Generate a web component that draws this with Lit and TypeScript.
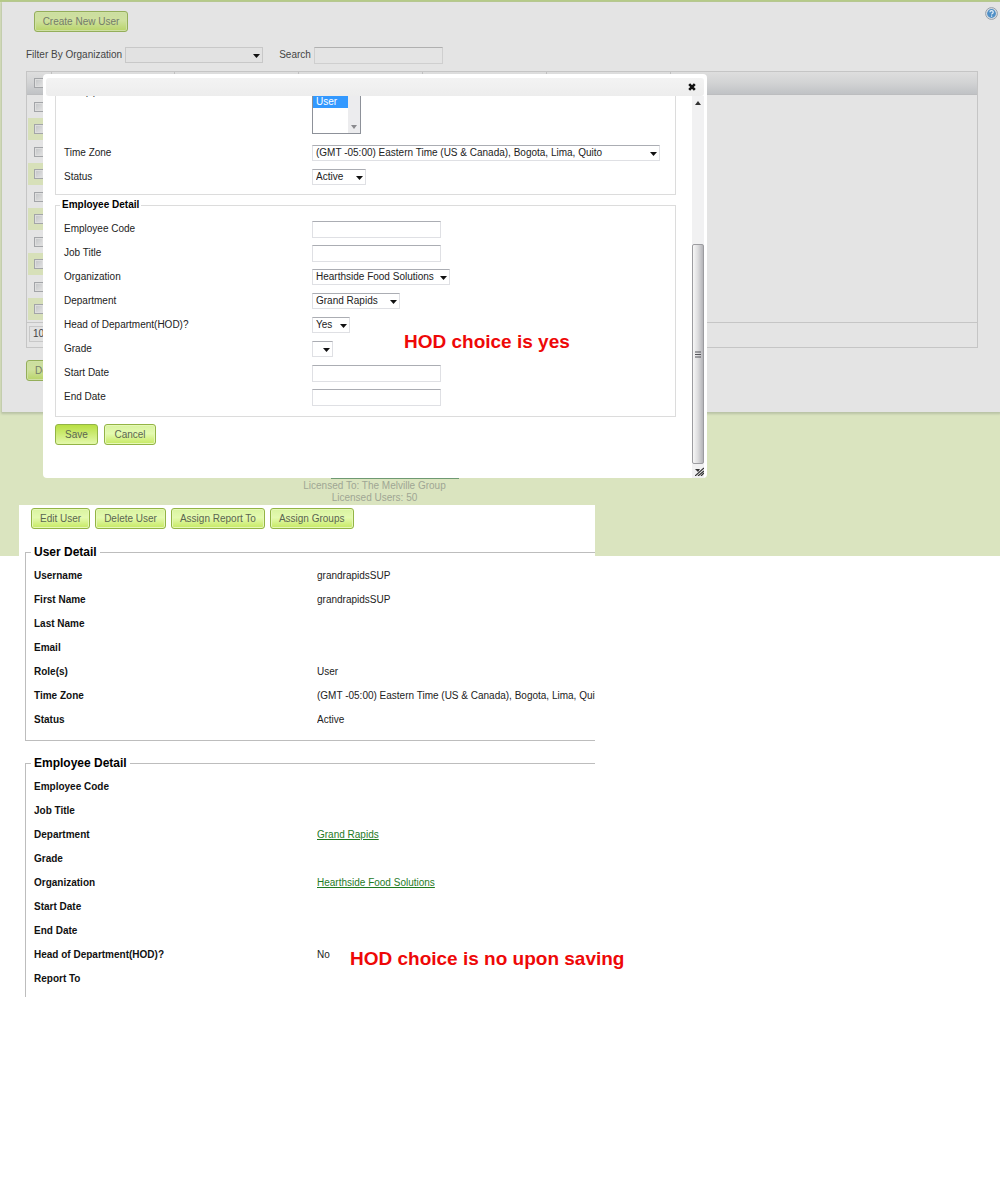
import { LitElement, html, css, nothing } from "lit";
import { customElement, property } from "lit/decorators.js";

const controls = css`
  :host,
  * {
    box-sizing: border-box;
  }
  button,
  input,
  select {
    font: inherit;
    color: inherit;
    margin: 0;
  }
  .btn {
    height: 21px;
    padding: 0 8px;
    border: 1px solid #93b445;
    border-radius: 3px;
    background: linear-gradient(#d9f3a0, #e4fab0 45%, #c6e961);
    box-shadow: inset 0 0 0 1px #e6f8b8;
    color: #5b6650;
    white-space: nowrap;
    line-height: 19px;
  }
  .btn.primary {
    background: linear-gradient(#b8df42, #e3f8ab);
    box-shadow: none;
  }
  .btn.dim {
    background: linear-gradient(#cbdda0, #cfe19e 45%, #b8d469);
    box-shadow: inset 0 0 0 1px #cfe0a4;
    border-color: #94ae5a;
    color: #747c6a;
  }
  .text {
    display: block;
    width: 129px;
    height: 17px;
    padding: 0 3px;
    border: 1px solid #dfe0e4;
    border-top-color: #abadb3;
    border-radius: 0;
    background: #fff;
    outline: none;
  }
  .text.dim {
    background: #e4e4e4;
    border-color: #cfcfcf;
    border-top-color: #b0b0b0;
  }
`;

@customElement("drop-down")
class DropDown extends LitElement {
  @property() name = "";
  @property() label = "";
  @property() value = "";
  @property({ type: Boolean }) dim = false;

  static styles = [
    controls,
    css`
      :host {
        display: block;
        position: relative;
        height: 16px;
      }
      .select {
        display: block;
        appearance: none;
        width: 100%;
        height: 16px;
        padding: 0 12px 0 3px;
        border: 1px solid #dfe0e4;
        border-top-color: #abadb3;
        border-radius: 0;
        background: #fff;
        line-height: 14px;
      }
      .select.dim {
        background: #e2e2e2;
        border-color: #c8c8c8;
      }
      .arrow {
        position: absolute;
        right: 3px;
        top: 7px;
        width: 7px;
        height: 4px;
        pointer-events: none;
      }
    `,
  ];

  render() {
    return html`<select
        class="select ${this.dim ? "dim" : ""}"
        aria-label=${this.label}
        name=${this.name}
      >
        <option>${this.value}</option>
      </select>
      <svg class="arrow" viewBox="0 0 7 4"><path d="M0 0h7L3.5 4z" fill="#111" /></svg>`;
  }
}

@customElement("user-list")
class UserList extends LitElement {
  static styles = [
    controls,
    css`
      :host {
        display: block;
        margin-left: 2px;
        padding: 9px 22px 31px 24px;
        background: #e4e4e4;
        color: #444;
        box-shadow: 0 1px 2px 1px #b9c2a5;
        position: relative;
      }
      .create {
        margin-left: 8px;
        width: 94px;
        display: block;
        padding: 0;
      }
      .filters {
        display: flex;
        align-items: center;
        height: 16px;
        margin: 15px 0 8px;
      }
      .org {
        width: 138px;
        margin: 0 16px 0 3px;
      }
      .search {
        margin-left: 3px;
      }
      .grid {
        border: 1px solid #c5c5c5;
        height: 277px;
      }
      .head-bg {
        background: linear-gradient(#dedede, #d2d3d4 50%, #c0c2c5);
        border-bottom: 1px solid #bcbdbf;
      }
      table {
        border-collapse: collapse;
        table-layout: fixed;
        width: 644px;
      }
      th {
        height: 22px;
        padding: 0;
        border-right: 1px solid #c0c0c0;
      }
      td {
        padding: 0;
        height: 23px;
      }
      tr:nth-child(even) td {
        height: 22px;
        background: #d7e0b9;
      }
      .pick {
        width: 24px;
      }
      .rows {
        border-bottom: 1px solid #c5c5c5;
        padding: 0 1px 2px;
      }
      .check {
        appearance: none;
        display: block;
        width: 10px;
        height: 10px;
        margin-left: 6px;
        border: 1px solid #a3a5a8;
        background: linear-gradient(135deg, #c2c4c6, #e3e3e3);
        box-shadow: inset 0 0 0 1px #dedede;
      }
      th .check {
        margin-left: 7px;
      }
      .pager {
        width: 44px;
        margin: 3px 2px;
      }
      .remove {
        margin-top: 12px;
        display: block;
      }
      .help {
        position: absolute;
        top: 5px;
        right: 2px;
        width: 13px;
        height: 13px;
        padding: 0;
        border: 0;
        background: none;
      }
      .help svg {
        display: block;
      }
    `,
  ];

  render() {
    const cols = [0, 1, 2, 3, 4];
    return html`
      <button class="btn dim create">Create New User</button>
      <button class="help" aria-label="Help">
        <svg width="13" height="13" viewBox="0 0 13 13">
          <circle cx="6.5" cy="6.5" r="5.9" fill="#d8dde2" stroke="#96a0aa" />
          <circle cx="6.5" cy="6.5" r="4.4" fill="#4f8fc6" />
          <path
            d="M4.9 5.2c0-2 3.3-2 3.3 0 0 1.200-1.600 1.200-1.600 2.200M6.600 8.500v1.200"
            fill="none"
            stroke="#e8f1f8"
            stroke-width="1.200"
          />
        </svg>
      </button>
      <div class="filters">
        <span>Filter By Organization</span>
        <drop-down class="org" dim label="Filter By Organization"></drop-down>
        <label for="search">Search</label>
        <input id="search" class="text dim search" type="text" />
      </div>
      <div class="grid">
        <div class="head-bg">
          <table>
            <tr>
              <th class="pick"><input class="check" type="checkbox" aria-label="Select all" /></th>
              ${cols.map(() => html`<th></th>`)}
            </tr>
          </table>
        </div>
        <div class="rows">
          <table>
            ${Array.from(
              { length: 10 },
              (_, i) => html`<tr>
                <td class="pick">
                  <input class="check" type="checkbox" aria-label="Select row ${i + 1}" />
                </td>
                ${cols.map(() => html`<td></td>`)}
              </tr>`
            )}
          </table>
        </div>
        <drop-down class="pager" dim label="Rows per page" value="10"></drop-down>
      </div>
      <button class="btn dim remove">Delete</button>
    `;
  }
}

interface Field {
  label: string;
  id: string;
  kind?: "text";
  value?: string;
  size?: string;
}

@customElement("edit-user-dialog")
class EditUserDialog extends LitElement {
  static styles = [
    controls,
    css`
      :host {
        display: block;
        background: #fff;
        border-radius: 4px;
        padding: 4px 3px 0;
        color: #222;
      }
      .bar {
        display: flex;
        justify-content: flex-end;
        align-items: center;
        height: 18px;
        padding-right: 8px;
        border-radius: 3px;
        background: linear-gradient(#f3f3f3, #ededed);
      }
      .close {
        width: 8px;
        height: 8px;
        padding: 0;
        border: 0;
        background: none;
      }
      .close svg {
        display: block;
      }
      .body {
        display: flex;
        overflow: hidden;
      }
      form {
        flex: 1;
        min-width: 0;
        padding: 0 16px 33px 9px;
        position: relative;
      }
      fieldset {
        min-width: 0;
        margin: 0;
        padding: 0 8px 5px;
        border: 1px solid #dcdcdc;
      }
      .account {
        margin-top: -13px;
        border-top: 0;
      }
      .employee {
        margin-top: 4px;
        padding-bottom: 7px;
      }
      legend {
        margin-left: -4px;
        padding: 0 2px;
        height: 12px;
        font-weight: bold;
        color: #000;
      }
      .employee legend {
        margin-bottom: 6px;
      }
      .row {
        display: grid;
        grid-template-columns: 248px 1fr;
        align-items: center;
        height: 24px;
      }
      .row.roles {
        height: 51px;
        align-items: start;
        margin-bottom: 7px;
      }
      .roles label {
        padding-top: 3px;
      }
      .list {
        display: flex;
        width: 49px;
        height: 51px;
        border: 1px solid #8d9199;
      }
      .list select {
        width: 35px;
        padding: 0;
        border: 0;
        outline: none;
        overflow: hidden;
        background: #fff;
      }
      .list option {
        height: 12px;
        min-height: 12px;
        padding: 0 3px;
        line-height: 12px;
      }
      .list option:checked {
        background: #3399ff linear-gradient(#3399ff, #3399ff);
        color: #fff;
      }
      .list-scroll {
        flex: 1;
        display: flex;
        align-items: flex-end;
        justify-content: center;
        padding-bottom: 4px;
        background: #ececee;
      }
      .w-tz {
        width: 348px;
      }
      .w-status {
        width: 54px;
      }
      .w-org {
        width: 138px;
      }
      .w-dept {
        width: 88px;
      }
      .w-hod {
        width: 38px;
      }
      .w-grade {
        width: 21px;
      }
      .actions {
        display: flex;
        gap: 6px;
        margin-top: 7px;
      }
      .save {
        width: 43px;
        padding: 0;
      }
      .cancel {
        width: 52px;
        padding: 0;
      }
      .track {
        display: flex;
        flex-direction: column;
        align-items: center;
        width: 12px;
        background: #f1f1f2;
      }
      .up {
        margin-top: 5px;
        flex: 0 0 4px;
      }
      .thumb {
        display: flex;
        align-items: center;
        justify-content: center;
        width: 12px;
        height: 220px;
        margin-top: auto;
        border: 1px solid #9c9ca0;
        border-radius: 2px;
        background: linear-gradient(90deg, #f7f7f7, #dcdcde 50%, #b4b4b8);
      }
      .grip {
        align-self: flex-end;
        margin: 3px 0 2px;
        flex: 0 0 9px;
      }
      .note {
        position: absolute;
        left: 358px;
        top: 235px;
        color: #ee0808;
        font-size: 19px;
        line-height: 22px;
        font-weight: bold;
        white-space: nowrap;
      }
    `,
  ];

  private account: Field[] = [
    {
      label: "Time Zone",
      id: "tz",
      value: "(GMT -05:00) Eastern Time (US & Canada), Bogota, Lima, Quito",
      size: "w-tz",
    },
    { label: "Status", id: "status", value: "Active", size: "w-status" },
  ];

  private employee: Field[] = [
    { label: "Employee Code", id: "code", kind: "text" },
    { label: "Job Title", id: "title", kind: "text" },
    { label: "Organization", id: "org", value: "Hearthside Food Solutions", size: "w-org" },
    { label: "Department", id: "dept", value: "Grand Rapids", size: "w-dept" },
    { label: "Head of Department(HOD)?", id: "hod", value: "Yes", size: "w-hod" },
    { label: "Grade", id: "grade", value: "", size: "w-grade" },
    { label: "Start Date", id: "start", kind: "text" },
    { label: "End Date", id: "end", kind: "text" },
  ];

  private row(f: Field) {
    return html`<div class="row">
      ${f.kind === "text"
        ? html`<label for=${f.id}>${f.label}</label><input class="text" type="text" id=${f.id} />`
        : html`<span>${f.label}</span
            ><drop-down
              class=${f.size ?? ""}
              name=${f.id}
              label=${f.label}
              .value=${f.value ?? ""}
            ></drop-down>`}
    </div>`;
  }

  render() {
    return html`
      <div class="bar">
        <button class="close" aria-label="Close">
          <svg width="8" height="8" viewBox="0 0 8 8">
            <path d="M1.200 1.200l5.600 5.600M6.800 1.200l-5.600 5.600" stroke="#111" stroke-width="2.600" />
          </svg>
        </button>
      </div>
      <div class="body">
        <form @submit=${(e: Event) => e.preventDefault()}>
          <fieldset class="account">
            <div class="row roles">
              <label for="roles">Role(s)</label>
              <div class="list">
                <select id="roles" multiple size="4">
                  <option></option>
                  <option selected>User</option>
                </select>
                <div class="list-scroll">
                  <svg width="6" height="4" viewBox="0 0 6 4"><path d="M0 0h6L3 4z" fill="#8a8a8e" /></svg>
                </div>
              </div>
            </div>
            ${this.account.map((f) => this.row(f))}
          </fieldset>
          <fieldset class="employee">
            <legend>Employee Detail</legend>
            ${this.employee.map((f) => this.row(f))}
          </fieldset>
          <div class="actions">
            <button class="btn primary save">Save</button>
            <button class="btn cancel" type="button">Cancel</button>
          </div>
          <div class="note">HOD choice is yes</div>
        </form>
        <div class="track">
          <svg class="up" width="6" height="4" viewBox="0 0 6 4"><path d="M0 4h6L3 0z" fill="#333" /></svg>
          <div class="thumb">
            <svg width="6" height="7" viewBox="0 0 6 7">
              <path d="M0 1h6M0 3.500h6M0 6h6" stroke="#55555a" />
            </svg>
          </div>
          <svg class="grip" width="9" height="9" viewBox="0 0 9 9">
            <path d="M0 9l9-8M3 9l6-5M6 9l3-3" stroke="#333" stroke-width="1.200" />
            <path d="M0 2h5L3 5z" fill="#333" />
          </svg>
        </div>
      </div>
    `;
  }
}

interface Detail {
  label: string;
  value?: string;
  link?: boolean;
}

@customElement("user-details")
class UserDetails extends LitElement {
  static styles = [
    controls,
    css`
      :host {
        display: block;
        position: relative;
        padding: 3px 0 0 6px;
        background: #fff;
        color: #222;
      }
      .actions {
        display: flex;
        gap: 5px;
        margin: 0 0 16px 6px;
      }
      fieldset {
        min-width: 0;
        margin: 0 0 15px;
        padding: 0 0 8px 8px;
        border: 1px solid #bdbdbd;
        border-right: 0;
      }
      fieldset:last-of-type {
        margin: 0;
        padding-bottom: 6px;
        border-bottom: 0;
      }
      legend {
        margin-left: -3px;
        padding: 0 3px;
        font-size: 12px;
        line-height: 14px;
        font-weight: bold;
        color: #000;
      }
      dl {
        display: grid;
        grid-template-columns: 283px minmax(0, 1fr);
        grid-auto-rows: 24px;
        align-items: center;
        margin: 5px 0 0;
      }
      dt {
        font-weight: bold;
        color: #111;
      }
      dd {
        margin: 0;
        white-space: nowrap;
        overflow: hidden;
      }
      a {
        color: #1f7a1f;
      }
      .note {
        position: absolute;
        left: 331px;
        top: 443px;
        color: #ee0808;
        font-size: 19px;
        line-height: 22px;
        font-weight: bold;
        white-space: nowrap;
      }
    `,
  ];

  private section(title: string, items: Detail[]) {
    return html`<fieldset>
      <legend>${title}</legend>
      <dl>
        ${items.map(
          (d) => html`<dt>${d.label}</dt>
            <dd>${d.link ? html`<a href="#">${d.value}</a>` : d.value ?? nothing}</dd>`
        )}
      </dl>
    </fieldset>`;
  }

  render() {
    return html`
      <div class="actions">
        ${["Edit User", "Delete User", "Assign Report To", "Assign Groups"].map(
          (t) => html`<button class="btn">${t}</button>`
        )}
      </div>
      ${this.section("User Detail", [
        { label: "Username", value: "grandrapidsSUP" },
        { label: "First Name", value: "grandrapidsSUP" },
        { label: "Last Name" },
        { label: "Email" },
        { label: "Role(s)", value: "User" },
        {
          label: "Time Zone",
          value: "(GMT -05:00) Eastern Time (US & Canada), Bogota, Lima, Quito",
        },
        { label: "Status", value: "Active" },
      ])}
      ${this.section("Employee Detail", [
        { label: "Employee Code" },
        { label: "Job Title" },
        { label: "Department", value: "Grand Rapids", link: true },
        { label: "Grade" },
        { label: "Organization", value: "Hearthside Food Solutions", link: true },
        { label: "Start Date" },
        { label: "End Date" },
        { label: "Head of Department(HOD)?", value: "No" },
        { label: "Report To" },
      ])}
      <div class="note">HOD choice is no upon saving</div>
    `;
  }
}

@customElement("app-root")
class AppRoot extends LitElement {
  static styles = css`
    :host {
      display: block;
      min-height: 100vh;
      background: #fff;
      font-family: "Liberation Sans", Arial, sans-serif;
      font-size: 10px;
      line-height: 12px;
    }
    .backdrop {
      position: relative;
      padding-bottom: 52px;
      border-top: 2px solid #b5cb86;
      background: #dae4bf;
    }
    .dialog {
      position: absolute;
      left: 43px;
      top: 72px;
      width: calc(100% - 336px);
      min-width: 664px;
    }
    .license {
      max-width: 749px;
      margin-top: 62px;
      text-align: center;
      color: #9fa694;
    }
    .vendor {
      display: block;
      width: 128px;
      height: 3px;
      margin: 0 auto 1px;
      border-bottom: 2px solid #6f9a72;
      position: relative;
      left: 20px;
    }
    .details {
      max-width: 576px;
      margin: -51px 0 0 19px;
    }
  `;

  render() {
    return html`
      <div class="backdrop">
        <user-list></user-list>
        <div class="license">
          <a class="vendor" href="#" aria-label="Vendor"></a>
          <div>Licensed To: The Melville Group</div>
          <div>Licensed Users: 50</div>
        </div>
        <edit-user-dialog class="dialog"></edit-user-dialog>
      </div>
      <user-details class="details"></user-details>
    `;
  }
}
